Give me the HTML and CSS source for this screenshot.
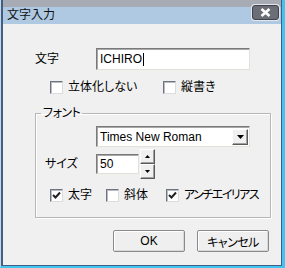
FILE: index.html
```html
<!DOCTYPE html>
<html lang="ja">
    <head>
        <meta charset="UTF-8">
        <title>文字入力</title>
        <link rel="stylesheet" href="styles.css">
    </head>
    <body>

        <div class="window">
            <div class="frame">
                <!-- タイトルバー -->
                <div class="titlebar">
                    <span class="title">文字入力</span>
                    <span class="close-btn">
                        <svg width="13" height="9" viewBox="0 0 13 9"><path d="M2.5 1 L10.5 8 M10.5 1 L2.5 8" stroke="#fff" stroke-width="2.6" fill="none"/></svg>
                    </span>
                </div>

                <div class="content">
                    <!-- 文字 -->
                    <div class="text-row">
                        <span class="label">文字</span>
                        <div class="edit text-edit">ICHIRO<span class="caret"></span></div>
                    </div>

                    <div class="option-row">
                        <span class="check solid"><span class="box"></span>立体化しない</span>
                        <span class="check"><span class="box"></span>縦書き</span>
                    </div>

                    <!-- フォント -->
                    <fieldset class="group">
                        <legend>フォント</legend>

                        <div class="combo">
                            <span class="combo-text">Times New Roman</span>
                            <span class="combo-btn">
                                <svg width="7" height="4" viewBox="0 0 7 4"><path d="M0 0 H7 L3.5 4 Z" fill="#000"/></svg>
                            </span>
                        </div>

                        <div class="size-row">
                            <span class="size-label">サイズ</span>
                            <div class="edit size-edit">50</div>
                            <div class="spinner">
                                <span class="spin-btn">
                                    <svg width="5" height="3" viewBox="0 0 5 3"><path d="M0 3 H5 L2.5 0 Z" fill="#000"/></svg>
                                </span>
                                <span class="spin-btn">
                                    <svg width="5" height="3" viewBox="0 0 5 3"><path d="M0 0 H5 L2.5 3 Z" fill="#000"/></svg>
                                </span>
                            </div>
                        </div>

                        <div class="style-row">
                            <span class="check bold"><span class="box checked"><svg width="9" height="9" viewBox="0 0 9 9"><path d="M1 4 L3.5 6.5 L8 1.5" stroke="#222" stroke-width="2" fill="none"/></svg></span>太字</span>
                            <span class="check italic"><span class="box"></span>斜体</span>
                            <span class="check antialias"><span class="box checked"><svg width="9" height="9" viewBox="0 0 9 9"><path d="M1 4 L3.5 6.5 L8 1.5" stroke="#222" stroke-width="2" fill="none"/></svg></span>アンチエイリアス</span>
                        </div>
                    </fieldset>

                    <!-- ボタン -->
                    <div class="buttons">
                        <button class="btn">OK</button>
                        <button class="btn cancel">キャンセル</button>
                    </div>
                </div>
            </div>
        </div>

    </body>
</html>
```

FILE: styles.css
```css
body {
    margin: 0;
    padding: 0;
    font-family: "Liberation Sans", "Noto Sans CJK JP", sans-serif;
    font-size: 12px;
    font-feature-settings: "palt";
    color: #000;
    background-color: #f0f0f0;
}

.window {
    width: 285px;
    height: 268px;
    box-sizing: border-box;
    border-left: 1px solid #c9d6e3;
    border-right: 3px solid #41c4ee;
    border-bottom: 2px solid #41c4ee;
}

.frame {
    height: 100%;
    box-sizing: border-box;
    display: flex;
    flex-direction: column;
    border-left: 2px solid #3d5f88;
    border-right: 1px solid #3d5f88;
    border-bottom: 1px solid #3d5f88;
    background-color: #f0f0f0;
}

.titlebar {
    height: 24px;
    flex: none;
    display: flex;
    justify-content: space-between;
    align-items: flex-start;
    background: linear-gradient(#a7abb4 0, #a7abb4 7px, #afc9e3 7px);
}

.title {
    padding: 7px 0 0 4px;
    line-height: 16px;
    font-size: 12px;
    color: #111;
}

.close-btn {
    margin: 5px 2px 0 0;
    width: 25px;
    height: 13px;
    display: flex;
    justify-content: center;
    align-items: center;
    background-color: #6b6e77;
    border: 1px solid #3f4248;
    border-radius: 3px;
    box-shadow: 0 0 0 1px #e4e8ee;
}

.content {
    flex: 1;
    padding: 0 11px 0 32px;
    display: flex;
    flex-direction: column;
}

.text-row {
    margin-top: 24px;
    display: flex;
    align-items: center;
}

.label {
    width: 61px;
    line-height: 16px;
}

.edit {
    box-sizing: border-box;
    background-color: #fff;
    border: 1px solid;
    border-color: #7a7a7a #e4e1da #e4e1da #7a7a7a;
    box-shadow: inset 1px 1px 0 #a8a8a8;
    display: flex;
    align-items: center;
    padding-left: 3px;
    line-height: 14px;
}

.text-edit {
    width: 154px;
    height: 22px;
}

.caret {
    display: inline-block;
    width: 1px;
    height: 13px;
    margin-left: 1px;
    background-color: #000;
}

.option-row {
    margin-top: 11px;
    height: 13px;
    display: flex;
    align-items: center;
}

.check {
    display: flex;
    align-items: center;
    gap: 5px;
    line-height: 13px;
    white-space: nowrap;
}

.solid {
    width: 128px;
    padding-left: 15px;
    box-sizing: border-box;
}

.box {
    flex: none;
    width: 13px;
    height: 13px;
    box-sizing: border-box;
    border: 1px solid;
    border-color: #6f7380 #dcdcdc #dcdcdc #6f7380;
    background-color: #fff;
    box-shadow: inset 1px 1px 0 #b8bcc4;
    display: flex;
    justify-content: center;
    align-items: center;
}

.group {
    margin: 12px 0 0 0;
    padding: 0 0 15px 0;
    width: 236px;
    box-sizing: border-box;
    border: 1px solid #b7b7b7;
    box-shadow: inset 1px 1px 0 #fff, 1px 1px 0 #fff;
    min-width: 0;
}

.group legend {
    margin-left: 5px;
    padding: 0 2px;
    line-height: 14px;
    letter-spacing: -0.5px;
}

.combo {
    margin: 6px 0 0 60px;
    width: 154px;
    height: 21px;
    box-sizing: border-box;
    background-color: #fff;
    border: 1px solid;
    border-color: #7a7a7a #e4e1da #e4e1da #7a7a7a;
    box-shadow: inset 1px 1px 0 #a8a8a8;
    display: flex;
    align-items: center;
    justify-content: space-between;
    padding: 1px 1px 1px 3px;
}

.combo-text {
    line-height: 14px;
}

.combo-btn {
    width: 16px;
    height: 16px;
    box-sizing: border-box;
    background-color: #f0f0f0;
    border: 1px solid;
    border-color: #fff #5a5a5a #5a5a5a #fff;
    box-shadow: inset -1px -1px 0 #a0a0a0;
    display: flex;
    justify-content: center;
    align-items: center;
}

.size-row {
    margin-top: 2px;
    height: 30px;
    display: flex;
    align-items: center;
}

.size-label {
    width: 51px;
    padding-left: 9px;
    line-height: 14px;
}

.size-edit {
    width: 43px;
    height: 20px;
}

.spinner {
    margin-left: 1px;
    display: flex;
    flex-direction: column;
}

.spin-btn {
    width: 15px;
    height: 15px;
    box-sizing: border-box;
    background-color: #f0f0f0;
    border: 1px solid;
    border-color: #fff #5a5a5a #5a5a5a #fff;
    box-shadow: inset -1px -1px 0 #a0a0a0;
    display: flex;
    justify-content: center;
    align-items: center;
}

.style-row {
    margin-top: 10px;
    height: 13px;
    padding-left: 14px;
    display: flex;
    align-items: center;
}

.bold {
    width: 56px;
}

.italic {
    width: 60px;
}

.antialias {
    letter-spacing: -1.5px;
}

.buttons {
    margin-top: 12px;
    padding-right: 1px;
    display: flex;
    justify-content: flex-end;
    gap: 12px;
}

.btn {
    width: 72px;
    height: 22px;
    padding: 0;
    font-family: "Liberation Sans", "Noto Sans CJK JP", sans-serif;
    font-size: 12px;
    font-feature-settings: "palt";
    color: #000;
    background-color: #efefef;
    border: 1px solid #8a8a8a;
    border-radius: 2px;
    box-shadow: inset 1px 1px 0 #fff, inset -1px -1px 0 #d8d8d8;
}

.cancel {
    letter-spacing: -0.5px;
}
```
